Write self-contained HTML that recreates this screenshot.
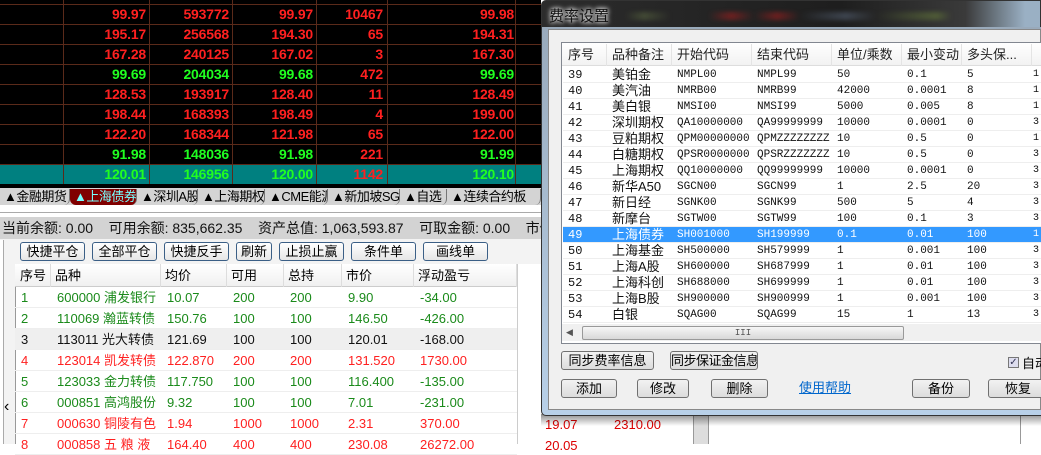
<!DOCTYPE html>
<html><head><meta charset="utf-8"><style>
*{margin:0;padding:0;box-sizing:border-box}
body{width:1041px;height:444px;overflow:hidden;position:relative;background:#fff;font-family:"Liberation Sans","Noto Sans CJK SC",sans-serif;}
.a{position:absolute;white-space:nowrap}
#top{left:0;top:0;width:541px;height:188px;background:#000}
.vl{position:absolute;top:0;width:1px;height:184px;background:#5a2a1a}
.hl{position:absolute;left:0;width:541px;height:1px;background:#5a2a1a}
.n{position:absolute;font:bold 14px "Liberation Sans",sans-serif;text-align:right;line-height:20px;letter-spacing:-0.2px}
.r{color:#ff2020}.g{color:#20ff20}
.tab{position:absolute;top:189px;height:16px;font:13px "Liberation Sans","Noto Sans CJK SC",sans-serif;line-height:16px;color:#000;padding-left:4px;border-right:1px solid #777;border-radius:0 0 6px 6px;white-space:nowrap;overflow:hidden;letter-spacing:-0.5px}
.btn{position:absolute;top:242px;height:19px;border:1px solid #3b5f86;border-radius:3px;background:linear-gradient(#fff,#e6e6e6);font:13px "Liberation Sans","Noto Sans CJK SC",sans-serif;text-align:center;line-height:17px;white-space:nowrap}
.th{position:absolute;top:264px;height:23px;font:13px "Liberation Sans","Noto Sans CJK SC",sans-serif;line-height:23px;border-right:1px solid #ddd;padding-left:4px}
.row{position:absolute;left:15px;width:502px;height:21px;font:13px "Liberation Sans","Noto Sans CJK SC",sans-serif;line-height:21px;border-bottom:1px solid #eee}
.row span{position:absolute;top:0}
.gr{color:#1a8a1a}.rd{color:#ff2020}.bk{color:#111}
.dl{position:absolute;left:563px;width:478px;height:16px;font:12px "Liberation Sans","Noto Sans CJK SC",sans-serif;line-height:16px;border-bottom:1px solid #eee;overflow:hidden}
.dl span{position:absolute;top:0;line-height:16px;white-space:nowrap}
.m{font:10px "Liberation Mono",monospace}
.db{position:absolute;height:19px;border:1px solid #707070;border-radius:3px;background:linear-gradient(#f2f2f2,#dcdcdc);font:13px "Liberation Sans","Noto Sans CJK SC",sans-serif;text-align:center;line-height:17px;white-space:nowrap;overflow:hidden}
</style></head><body>

<div class="a" id="top"></div>
<div class="a" style="left:0;top:164px;width:541px;height:20px;background:#008080"></div>
<div class="vl" style="left:63px"></div><div class="vl" style="left:149px"></div><div class="vl" style="left:232px"></div><div class="vl" style="left:316px"></div><div class="vl" style="left:387px"></div><div class="vl" style="left:515px"></div>
<div class="hl" style="top:4px"></div><div class="hl" style="top:24px"></div><div class="hl" style="top:44px"></div><div class="hl" style="top:64px"></div><div class="hl" style="top:84px"></div><div class="hl" style="top:104px"></div><div class="hl" style="top:124px"></div><div class="hl" style="top:144px"></div><div class="hl" style="top:164px"></div>
<div class="a" style="left:0;top:184px;width:541px;height:4px;background:#000"></div>

<div id="nums"></div>
<script>
var d=[["r","99.97","r","593772","r","99.97","r","10467","r","99.98"],
["r","195.17","r","256568","r","194.30","r","65","r","194.31"],
["r","167.28","r","240125","r","167.02","r","3","r","167.30"],
["g","99.69","g","204034","g","99.68","r","472","g","99.69"],
["r","128.53","r","193917","r","128.40","r","11","r","128.49"],
["r","198.44","r","168393","r","198.49","r","4","r","199.00"],
["r","122.20","r","168344","r","121.98","r","65","r","122.00"],
["g","91.98","g","148036","g","91.98","r","221","g","91.99"],
["g","120.01","g","146956","g","120.00","r","1142","g","120.10"]];
var R=[146,229,313,383,514],h="";
d.forEach(function(r,i){for(var j=0;j<5;j++){h+='<div class="n '+r[j*2]+'" style="right:'+(1041-R[j])+'px;top:'+(4+20*i)+'px">'+r[j*2+1]+'</div>'}});
document.getElementById('nums').innerHTML=h;
</script>

<div class="a" style="left:0;top:188px;width:541px;height:17px;background:#d4d4d4"></div>
<div class="tab" style="left:0;width:70px">▲金融期货</div>
<div class="tab" style="left:70px;width:67px;background:#800000;color:#7ff">▲上海债券</div>
<div class="tab" style="left:137px;width:61px">▲深圳A股</div>
<div class="tab" style="left:198px;width:67px">▲上海期权</div>
<div class="tab" style="left:265px;width:63px">▲CME能源</div>
<div class="tab" style="left:328px;width:72px">▲新加坡SGX</div>
<div class="tab" style="left:400px;width:47px">▲自选</div>
<div class="tab" style="left:447px;width:94px">▲连续合约板</div>
<div class="a" style="left:0;top:205px;width:541px;height:12px;background:#fff"></div>
<div class="a" style="left:0;top:212px;width:541px;height:1px;background:#aaa"></div>
<div class="a" style="left:0;top:217px;width:541px;height:22px;background:#d3d3d3;font:14px 'Liberation Sans','Noto Sans CJK SC',sans-serif;line-height:22px;color:#111;padding-left:2px;overflow:hidden">当前余额: 0.00&nbsp;&nbsp;&nbsp;&nbsp;可用余额: 835,662.35&nbsp;&nbsp;&nbsp;&nbsp;资产总值: 1,063,593.87&nbsp;&nbsp;&nbsp;&nbsp;可取金额: 0.00&nbsp;&nbsp;&nbsp;&nbsp;市值:</div>
<div class="a" style="left:0;top:239px;width:541px;height:205px;background:#f3f3f3"></div>
<div class="a" style="left:0;top:240px;width:4px;height:204px;border-right:1px solid #aaa;background:#fff"></div>
<div class="a" style="left:4px;top:398px;font:16px 'Liberation Sans';color:#000">‹</div>
<div class="btn" style="left:20px;width:65px">快捷平仓</div>
<div class="btn" style="left:92px;width:65px">全部平仓</div>
<div class="btn" style="left:164px;width:65px">快捷反手</div>
<div class="btn" style="left:236px;width:36px">刷新</div>
<div class="btn" style="left:279px;width:65px">止损止赢</div>
<div class="btn" style="left:351px;width:65px">条件单</div>
<div class="btn" style="left:423px;width:65px">画线单</div>
<div class="a" style="left:15px;top:264px;width:502px;height:180px;background:#fff;border-left:1px solid #999"></div>
<div class="a" style="left:15px;top:264px;width:502px;height:23px;background:linear-gradient(#fff,#f0f0f0);border-bottom:1px solid #ccc"></div>
<div class="th" style="left:16px;width:35px">序号</div>
<div class="th" style="left:51px;width:110px">品种</div>
<div class="th" style="left:161px;width:66px">均价</div>
<div class="th" style="left:227px;width:57px">可用</div>
<div class="th" style="left:284px;width:58px">总持</div>
<div class="th" style="left:342px;width:72px">市价</div>
<div class="th" style="left:414px;width:103px">浮动盈亏</div>
<div id="lt"></div>
<script>
var L=[["gr","1","600000 浦发银行","10.07","200","200","9.90","-34.00"],
["gr","2","110069 瀚蓝转债","150.76","100","100","146.50","-426.00"],
["bk","3","113011 光大转债","121.69","100","100","120.01","-168.00"],
["rd","4","123014 凯发转债","122.870","200","200","131.520","1730.00"],
["gr","5","123033 金力转债","117.750","100","100","116.400","-135.00"],
["gr","6","000851 高鸿股份","9.32","100","100","7.01","-231.00"],
["rd","7","000630 铜陵有色","1.94","1000","1000","2.31","370.00"],
["rd","8","000858 五 粮 液","164.40","400","400","230.08","26272.00"]];
var X=[6,42,152,218,275,333,405],h2="";
L.forEach(function(r,i){h2+='<div class="row '+r[0]+'" style="top:'+(287+21*i)+'px;'+(i==2?'background:#efefef':'')+'">';
for(var j=0;j<7;j++){h2+='<span style="left:'+X[j]+'px">'+r[j+1]+'</span>'}h2+='</div>'});
document.getElementById('lt').innerHTML=h2;
</script>
<div class="a" style="left:517px;top:264px;width:24px;height:180px;background:#fff;border-left:1px solid #ccc"></div>

<!-- bottom right background -->
<div class="a" style="left:541px;top:410px;width:500px;height:34px;background:#fff"></div>
<div class="a" style="left:541px;top:416px;width:152px;height:28px;color:#d00;font:13px 'Liberation Sans';line-height:16px"><span class="a" style="left:4px;top:1px">19.07</span><span class="a" style="left:73px;top:1px">2310.00</span><span class="a" style="left:4px;top:22px">20.05</span></div>
<div class="a" style="left:693px;top:410px;width:16px;height:34px;background:#ddd;border-left:1px solid #999;border-right:1px solid #999"></div>
<div class="a" style="left:1020px;top:410px;width:1px;height:34px;background:#999"></div>
<div class="a" style="left:541px;top:414px;width:500px;height:12px;background:linear-gradient(rgba(0,0,0,.45),rgba(0,0,0,0))"></div>

<!-- dialog -->
<div class="a" style="left:541px;top:0;width:500px;height:416px;background:linear-gradient(90deg,#2c2c2c,#1e1e1e 60%,#3a3a3a 85%,#9ab0c4 97%);border:1px solid #333;border-radius:5px 0 0 5px"></div>
<div class="a" style="left:625px;top:12px;width:380px;height:8px;background:linear-gradient(90deg,transparent,rgba(120,140,80,.35) 5%,transparent 12%,transparent 22%,rgba(200,30,30,.45) 28%,transparent 34%,rgba(200,30,30,.45) 40%,transparent 46%,rgba(120,140,170,.35) 58%,transparent 66%,rgba(120,150,60,.4) 82%,transparent 86%);filter:blur(2px)"></div>
<div class="a" style="left:549px;top:5px;color:#111;font:15px 'Liberation Sans','Noto Sans CJK SC',sans-serif;text-shadow:0 0 6px #fff,0 0 4px #fff">费率设置</div>
<div class="a" style="left:542px;top:27px;width:499px;height:388px;background:linear-gradient(#9ab,#b8d0e8);border-radius:0 0 0 4px"></div>
<div class="a" style="left:548px;top:29px;width:493px;height:381px;background:#f0f0f0;border:1px solid #888"></div>
<div class="a" style="left:561px;top:42px;width:480px;height:302px;background:#fff;border:1px solid #828790;border-right:none"></div>
<div class="a" style="left:562px;top:43px;width:479px;height:23px;background:linear-gradient(#fff,#f2f2f2);border-bottom:1px solid #ddd"></div>
<div id="dh"></div>
<div id="dr"></div>
<script>
var H=["序号","品种备注","开始代码","结束代码","单位/乘数","最小变动","多头保...",""];
var HX=[563,607,672,752,832,902,962,1032],s="";
H.forEach(function(t,i){s+='<div class="a" style="left:'+HX[i]+'px;top:44px;height:22px;width:'+((HX[i+1]||1060)-HX[i])+'px;border-right:1px solid #e4e4e4;font:13px \'Liberation Sans\',\'Noto Sans CJK SC\',sans-serif;line-height:22px;padding-left:5px;color:#222;overflow:hidden">'+t+'</div>'});
document.getElementById('dh').innerHTML=s;
var D=[["39","美铂金","NMPL00","NMPL99","50","0.1","5"],["40","美汽油","NMRB00","NMRB99","42000","0.0001","8"],["41","美白银","NMSI00","NMSI99","5000","0.005","8"],["42","深圳期权","QA10000000","QA99999999","10000","0.0001","0"],["43","豆粕期权","QPM00000000","QPMZZZZZZZZ","10","0.5","0"],["44","白糖期权","QPSR0000000","QPSRZZZZZZZ","10","0.5","0"],["45","上海期权","QQ10000000","QQ99999999","10000","0.0001","0"],["46","新华A50","SGCN00","SGCN99","1","2.5","20"],["47","新日经","SGNK00","SGNK99","500","5","4"],["48","新摩台","SGTW00","SGTW99","100","0.1","3"],["49","上海债券","SH001000","SH199999","0.1","0.01","100"],["50","上海基金","SH500000","SH579999","1","0.001","100"],["51","上海A股","SH600000","SH687999","1","0.01","100"],["52","上海科创","SH688000","SH699999","1","0.01","100"],["53","上海B股","SH900000","SH900999","1","0.001","100"],["54","白银","SQAG00","SQAG99","15","1","13"]];
var DX=[5,49,114,194,274,344,404,470],t="";
D.forEach(function(r,i){var sel=i==10;t+='<div class="dl" style="top:'+(67+16*i)+'px;'+(sel?'background:#3399ff;color:#fff;':'color:#111;')+'">';
for(var j=0;j<7;j++){t+='<span class="'+(j==1?'':'m')+'" style="left:'+DX[j]+'px;'+(j==1?'font-size:13px;':'font-size:'+(j==0?'12':'11')+'px;')+'">'+r[j]+'</span>'}
t+='<span class="m" style="left:'+DX[7]+'px">'+(i<3||i==4||i==10?'1':'3')+'</span></div>'});
document.getElementById('dr').innerHTML=t;
</script>
<div class="a" style="left:562px;top:324px;width:479px;height:17px;background:#f0f0f0"></div>
<div class="a" style="left:566px;top:327px;font:9px 'Liberation Sans';color:#555">◀</div>
<div class="a" style="left:582px;top:326px;width:322px;height:14px;border:1px solid #999;border-radius:2px;background:linear-gradient(#f6f6f6,#d8d8d8);font:9px 'Liberation Mono';text-align:center;line-height:12px;color:#555">III</div>
<div class="db" style="left:561px;top:351px;width:93px">同步费率信息</div>
<div class="db" style="left:670px;top:351px;width:88px;letter-spacing:-0.5px">同步保证金信息</div>
<div class="a" style="left:1008px;top:357px;width:11px;height:11px;border:1px solid #777;background:#dde;font:10px 'DejaVu Sans';line-height:9px;color:#335;text-align:center">✓</div>
<div class="a" style="left:1022px;top:353px;font:13px 'Liberation Sans','Noto Sans CJK SC',sans-serif">自动</div>
<div class="db" style="left:561px;top:379px;width:56px">添加</div>
<div class="db" style="left:637px;top:379px;width:52px">修改</div>
<div class="db" style="left:711px;top:379px;width:57px">删除</div>
<div class="a" style="left:799px;top:377px;font:13px 'Liberation Sans','Noto Sans CJK SC',sans-serif;color:#0066cc;text-decoration:underline">使用帮助</div>
<div class="db" style="left:912px;top:379px;width:58px">备份</div>
<div class="db" style="left:988px;top:379px;width:60px">恢复</div>
</body></html>
